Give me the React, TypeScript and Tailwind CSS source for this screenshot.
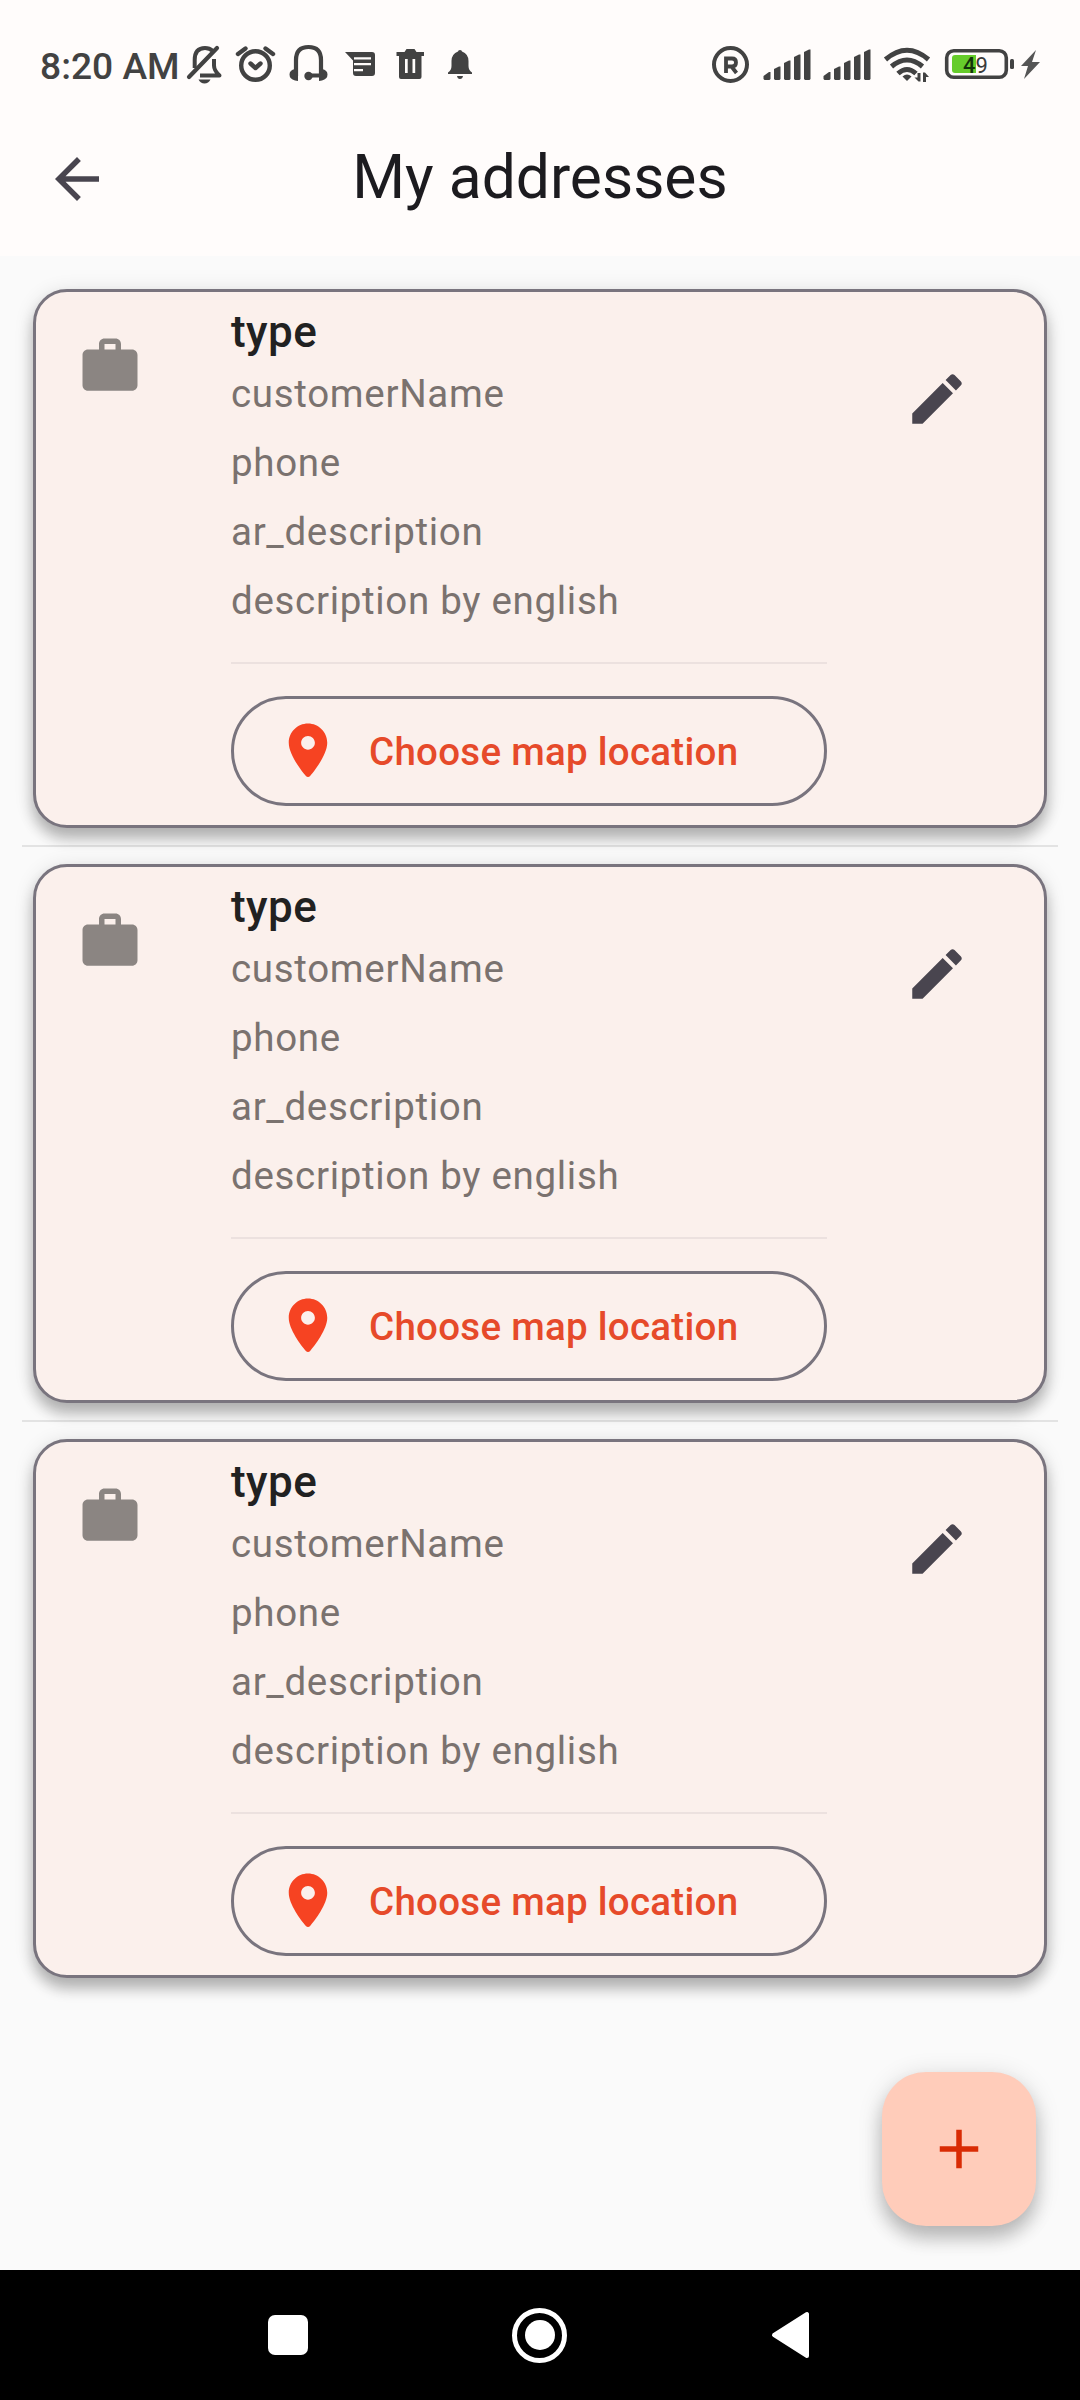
import React from "react";

const ink = "#424242";

function Glyph({ x, w, children }: { x: number; w: number; children: React.ReactNode }) {
  return (
    <svg className="h-[48px] shrink-0" width={w} height={48} viewBox={`${x} 40 ${w} 48`} fill="none">
      {children}
    </svg>
  );
}

function Signal({ x, w, s }: { x: number; w: number; s: number }) {
  return (
    <Glyph x={x} w={w}>
      <g fill={ink}>
        <path d={`M${s} 79v-3l5.500-4H${s + 7}v7l-1 1h-5z`} />
        <path d={`M${s + 10.5} 79V69l5-2.500h1.500V79l-1 1h-4.500z`} />
        <path d={`M${s + 20.5} 79V63l5-2.500h1.500V79l-1 1h-4.500z`} />
        <path d={`M${s + 30.5} 79V57l5-2.500h1.500V79l-1 1h-4.500z`} />
        <path d={`M${s + 40.5} 79V52l5-2.500h1.500V79l-1 1h-4.500z`} />
      </g>
    </Glyph>
  );
}

function StatusBar() {
  return (
    <div className="flex h-[102px] items-start pt-[40px]">
      <div className="w-[182px] pt-px pl-[40px] text-[37px] leading-[52px] font-medium whitespace-nowrap text-[#424242]">
        <span className="inline-block origin-left scale-x-[1.005]">8:20 AM</span>
      </div>
      <Glyph x={182} w={48}>
        <path d="M194.700 68V60q0-12 10.300-12 4.500 0 8 3M200 75.500h19.500q-5.500-5-5.500-10V59" stroke={ink} strokeWidth={4} strokeLinejoin="round" />
        <path d="M189 77L217 48" stroke={ink} strokeWidth={4.200} strokeLinecap="round" />
        <path d="M198.500 79.500h12q-2 4-6 4t-6-4z" fill={ink} />
      </Glyph>
      <Glyph x={230} w={52}>
        <circle cx={255.500} cy={65.500} r={14.300} stroke={ink} strokeWidth={4.400} />
        <path d="M250.500 63.500l5 4.500 5-4.500M238 54l7.500-5.500M273 54l-7.500-5.500" stroke={ink} strokeWidth={4.400} strokeLinecap="round" strokeLinejoin="round" />
      </Glyph>
      <Glyph x={282} w={54}>
        <path d="M296 76V60q0-13 12.500-13T321 60v16M309 75.500h12" stroke={ink} strokeWidth={4.200} />
        <circle cx={308.500} cy={76} r={4.200} fill={ink} />
        <path d="M298 68.500v12.500l-3-.5q-5.500-1.500-5.500-6t5.500-5.500zM319 68.500v12.500l3-.5q5.500-1.500 5.500-6t-5.500-5.500z" fill={ink} />
      </Glyph>
      <Glyph x={336} w={50}>
        <path fillRule="evenodd" clipRule="evenodd" fill={ink} d="M345 52h27q3 0 3 3v18q0 3-3 3h-16q-3 0-3-3V60.500zM354 57.200v2.300h17v-2.300zM354 63v2.300h17V63zM354 69v2.300h9V69z" />
      </Glyph>
      <Glyph x={386} w={50}>
        <path fillRule="evenodd" clipRule="evenodd" fill={ink} d="M396.500 52h8l2-3h8l2 3h7.500v4h-27.500zM399 56h22.500v21q0 2-2 2H401q-2 0-2-2zM405 59v14h2.700V59zM412.500 59v14h2.700V59z" />
      </Glyph>
      <Glyph x={436} w={48}>
        <path fill={ink} d="M448 74v-1.500q3.500-2.500 3.500-6.500v-5q0-7 6.500-9.500Q458 50 460 50t2 1.500q6.500 2.500 6.500 9.500v5q0 4 3.500 6.500V74zM457 76h6q-.5 3-3 3t-3-3z" />
      </Glyph>
      <div className="flex-1" />
      <Glyph x={704} w={52}>
        <circle cx={730.500} cy={64.500} r={16.500} stroke={ink} strokeWidth={4} />
        <path d="M726 73V58.500h6q4 0 4 4t-4 4h-6M731.500 66.500l5 6.500" stroke={ink} strokeWidth={3.800} />
      </Glyph>
      <Signal x={756} w={60} s={763.500} />
      <Signal x={816} w={62} s={823.500} />
      <Glyph x={878} w={60}>
        <g stroke={ink} strokeWidth={5}>
          <path d="M885.500 59.500q21.500-18.500 43 0M891.500 66.500q15.500-13 31 0M898 73.500q9-8 18 0" />
        </g>
        <path d="M902.500 76.500q4.500-4 9 0L907 81z" fill={ink} />
        <path d="M920.500 73v8.500h-2l-4-4h3V73zM923 82v-9.500h2l4 4.500h-3v5z" fill={ink} />
      </Glyph>
      <Glyph x={938} w={80}>
        <rect x={946.700} y={50.700} width={59.600} height={26.600} rx={7} stroke={ink} strokeWidth={3.600} />
        <path d="M976 55v18h-21q-3 0-3-3V58q0-3 3-3z" fill="#66cc2b" />
        <rect x={1010} y={59} width={4} height={10} rx={1.500} fill={ink} />
        <text x={963} y={72.500} fontFamily="Roboto, sans-serif" fontSize={22} fill="#3a3a3a">
          <tspan fill="#12350a" fontWeight={500}>4</tspan>9
        </text>
      </Glyph>
      <Glyph x={1018} w={62}>
        <path d="M1036 50l-15 16h7l-4 13 16-17h-8z" fill="#555" />
      </Glyph>
    </div>
  );
}

function MaterialIcon({ d, color }: { d: string; color: string }) {
  return (
    <svg className="block size-[66px] shrink-0" viewBox="0 0 24 24" fill={color}>
      <path d={d} />
    </svg>
  );
}

const paths = {
  back: "M20 11H7.830l5.590-5.590L12 4l-8 8 8 8 1.410-1.410L7.830 13H20v-2z",
  work: "M20 6h-4V4c0-1.110-.89-2-2-2h-4c-1.110 0-2 .89-2 2v2H4c-1.110 0-1.990.89-1.990 2L2 19c0 1.110.89 2 2 2h16c1.110 0 2-.89 2-2V8c0-1.110-.89-2-2-2zm-6 0h-4V4h4v2z",
  edit: "M3 17.250V21h3.750L17.810 9.940l-3.750-3.750L3 17.250zM20.710 7.040c.39-.39.39-1.020 0-1.410l-2.340-2.340c-.39-.39-1.020-.39-1.410 0l-1.830 1.830 3.750 3.750 1.830-1.830z",
  place: "M12 2C8.130 2 5 5.130 5 9c0 4.170 4.420 9.920 6.240 12.110.4.480 1.130.480 1.530 0C14.580 18.920 19 13.170 19 9c0-3.870-3.130-7-7-7zm0 9.500c-1.380 0-2.500-1.120-2.500-2.500s1.120-2.500 2.500-2.500 2.500 1.120 2.500 2.500-1.120 2.500-2.500 2.500z",
  add: "M19 13h-6v6h-2v-6H5v-2h6V5h2v6h6v2z",
};

const details = ["customerName", "phone", "ar_description", "description by english"];

function AddressCard() {
  return (
    <article className="mx-[33px] flex h-[539px] rounded-[34px] border-[3px] border-[#79747e] bg-[#fbf0ec] pl-[41px] shadow-[0_11px_14px_rgba(0,0,0,0.24),0_3px_20px_rgba(0,0,0,0.12)]">
      <div className="w-[154px] pt-[41px]">
        <MaterialIcon d={paths.work} color="#8b8582" />
      </div>
      <div className="w-[596px] pt-[10px]">
        <h2 className="-mb-[3px] text-[44px] leading-[60px] font-medium tracking-[0.41px] text-[#212121]">type</h2>
        {details.map((line) => (
          <p key={line} className="text-[38.5px] leading-[69px] tracking-[0.69px] text-[#7a726f]">
            {line}
          </p>
        ))}
        <div className="mt-[27px] h-[2px] bg-[#ece1df]" />
        <button className="mt-[32px] flex h-[110px] w-full items-center rounded-full border-[3px] border-[#79747e] pl-[41px]">
          <MaterialIcon d={paths.place} color="#f64322" />
          <span className="ml-[28px] text-[38.5px] leading-[55px] font-medium tracking-[0.275px] whitespace-nowrap text-[#e64a2a]">
            Choose map location
          </span>
        </button>
      </div>
      <button className="mt-[74px] ml-[77px] flex size-[66px]">
        <MaterialIcon d={paths.edit} color="#49454f" />
      </button>
    </article>
  );
}

function NavigationBar() {
  return (
    <nav className="flex h-[130px] items-center bg-black">
      <div className="ml-[268px] size-[40px] rounded-[7px] bg-white" />
      <div className="ml-[204px] flex size-[55px] items-center justify-center rounded-full border-[5px] border-white">
        <div className="size-[30px] rounded-full bg-white" />
      </div>
      <svg className="ml-[204px]" width={39} height={48} viewBox="0 0 39 48" fill="#fff">
        <path d="M3 24L36 3v42z" stroke="#fff" strokeWidth={4} strokeLinejoin="round" />
      </svg>
    </nav>
  );
}

export default function App() {
  return (
    <div className="relative flex h-[2400px] w-[1080px] flex-col overflow-hidden bg-[#fafafa] font-['Roboto',sans-serif]">
      <header className="h-[256px] bg-[#fffcfb]">
        <StatusBar />
        <div className="grid h-[154px] grid-cols-[110px_1fr_110px] items-center pr-[44px] pl-[44px]">
          <MaterialIcon d={paths.back} color="#49454f" />
          <h1 className="pb-[4px] text-center text-[60.5px] leading-[77px] text-[#1c1b1f]">My addresses</h1>
        </div>
      </header>
      <main className="flex-1 pt-[33px]">
        <AddressCard />
        <div className="mx-[22px] my-[17px] h-[2px] bg-black/9" />
        <AddressCard />
        <div className="mx-[22px] my-[17px] h-[2px] bg-black/9" />
        <AddressCard />
      </main>
      <button className="absolute right-[44px] bottom-[174px] flex size-[154px] items-center justify-center rounded-[44px] bg-[#ffccba] shadow-[0_13px_18px_rgba(0,0,0,0.2),0_4px_26px_rgba(0,0,0,0.14)]">
        <MaterialIcon d={paths.add} color="#d92b04" />
      </button>
      <NavigationBar />
    </div>
  );
}
